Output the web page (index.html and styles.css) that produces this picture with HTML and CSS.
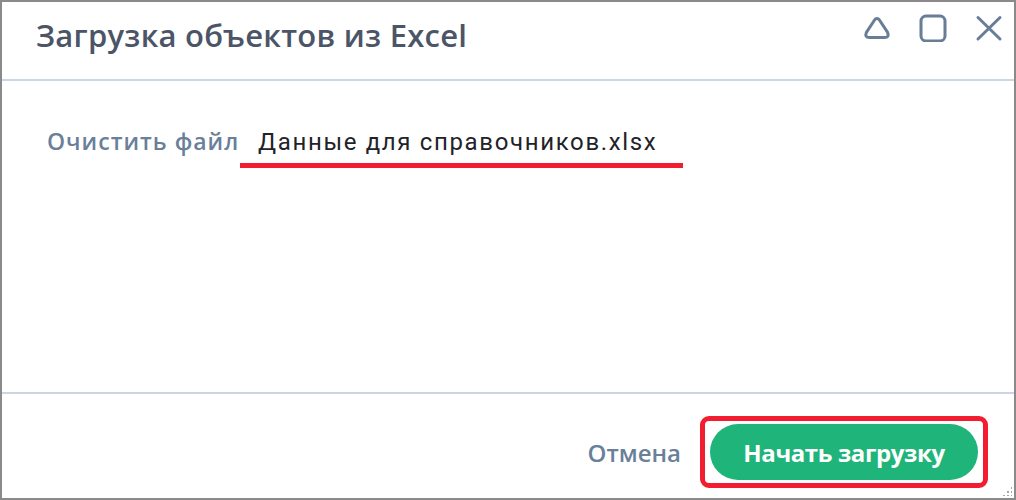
FILE: index.html
```html
<!DOCTYPE html>
<html lang="ru">
<head>
<meta charset="utf-8">
<title>Загрузка объектов из Excel</title>
<link rel="stylesheet" href="styles.css">
</head>
<body>
<div class="window">
  <header class="header">
    <h1 class="title">Загрузка объектов из Excel</h1>
    <div class="controls">
      <svg class="icon" width="28" height="28" viewBox="0 0 28 28"><path d="M11.4 6.2 Q14 2.6 16.6 6.2 L24.6 18.4 Q26.6 23.6 21.6 23.6 L6.4 23.6 Q1.4 23.6 3.4 18.4 Z" fill="none" stroke="#687d96" stroke-width="3" stroke-linejoin="round"/></svg>
      <svg class="icon" width="28" height="28" viewBox="0 0 28 28"><rect x="2" y="2" width="24" height="25" rx="5" fill="none" stroke="#687d96" stroke-width="3"/></svg>
      <svg class="icon" width="28" height="28" viewBox="0 0 28 28"><path d="M3 3.5 L25 25 M25 3.5 L3 25" stroke="#687d96" stroke-width="3" stroke-linecap="round"/></svg>
    </div>
  </header>
  <main class="content">
    <div class="row">
      <span class="label">Очистить файл</span>
      <span class="file">Данные для справочников.xlsx</span>
    </div>
  </main>
  <footer class="footer">
    <button class="cancel">Отмена</button>
    <div class="highlight">
      <button class="start">Начать загрузку</button>
    </div>
    <span class="grip"></span>
  </footer>
</div>
</body>
</html>
```

FILE: styles.css
```css
html, body {
  margin: 0;
  padding: 0;
  background: #ffffff;
}
.window {
  width: 1016px;
  height: 500px;
  box-sizing: border-box;
  border: 2px solid #8a8a8a;
  display: flex;
  flex-direction: column;
  position: relative;
  font-family: "Open Sans", "Noto Sans", sans-serif;
}
.header {
  height: 79px;
  box-sizing: border-box;
  border-bottom: 2px solid #cbd6e4;
  display: flex;
  align-items: flex-start;
  justify-content: space-between;
  padding: 0 11px 0 34px;
}
.title {
  margin: 0;
  margin-top: 12px;
  font-size: 31px;
  font-weight: 600;
  color: #4b5567;
  letter-spacing: 0.25px;
}
.controls {
  display: flex;
  gap: 28px;
  margin-top: 12px;
}
.icon {
  display: block;
}
.content {
  flex: 1;
  border-bottom: 2px solid #cbd6e4;
  padding: 0 0 0 45px;
}
.row {
  display: flex;
  align-items: baseline;
  margin-top: 44px;
}
.label {
  font-family: "Open Sans", sans-serif;
  font-size: 23px;
  font-weight: 600;
  color: #6a7f99;
  letter-spacing: 1px;
  width: 193px;
}
.file {
  font-family: "Roboto", sans-serif;
  font-size: 24px;
  color: #1f2329;
  letter-spacing: 1.65px;
  padding: 0 26px 7px 18px;
  border-bottom: 5px solid #f21d2e;
}
.footer {
  height: 104px;
  display: flex;
  align-items: center;
  justify-content: flex-end;
  padding-right: 26px;
  box-sizing: border-box;
}
.cancel {
  border: 0;
  background: none;
  font-family: "Open Sans", sans-serif;
  font-size: 24px;
  font-weight: 600;
  color: #6a7f99;
  padding: 0;
  margin-right: 19px;
  margin-top: 12px;
}
.highlight {
  border: 5px solid #f21d2e;
  border-radius: 9px;
  padding: 3px 5px;
  margin-top: 12px;
}
.start {
  display: block;
  width: 268px;
  height: 56px;
  border: 0;
  border-radius: 28px;
  background: #1fb47a;
  color: #ffffff;
  font-family: "Open Sans", sans-serif;
  font-size: 24px;
  font-weight: 700;
  letter-spacing: -0.4px;
}
.grip {
  position: absolute;
  right: 2px;
  bottom: 2px;
  width: 10px;
  height: 10px;
  background:
    radial-gradient(circle, #a0a7b0 1.2px, transparent 1.5px) 0 0 / 4px 4px;
  clip-path: polygon(100% 0, 100% 100%, 0 100%);
}
```
